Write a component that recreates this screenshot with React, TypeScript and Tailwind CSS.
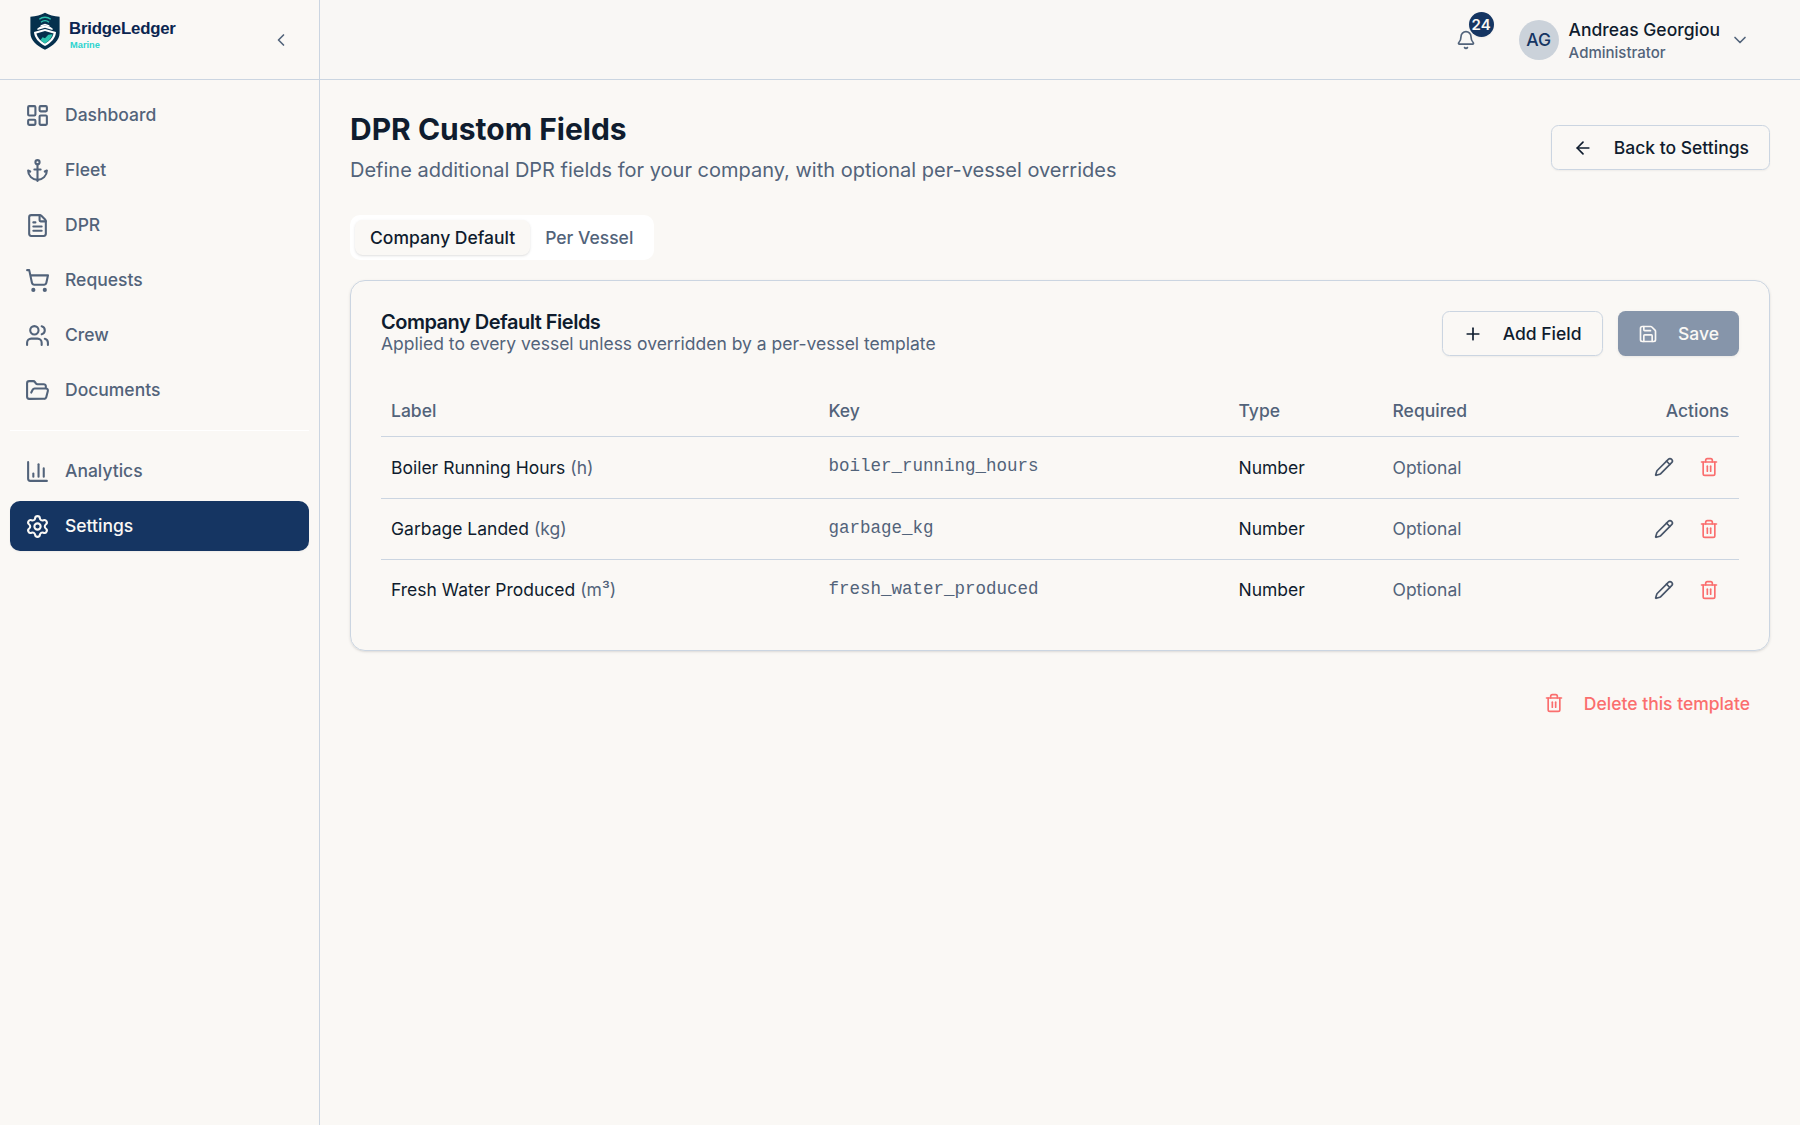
import {
  Anchor,
  ArrowLeft,
  Bell,
  ChartColumn,
  ChevronDown,
  ChevronLeft,
  FileText,
  FolderOpen,
  LayoutDashboard,
  Pencil,
  Plus,
  Save,
  Settings,
  ShoppingCart,
  Trash2,
  Users,
  type LucideIcon,
} from "lucide-react";

const mainNav = [
  { label: "Dashboard", icon: LayoutDashboard },
  { label: "Fleet", icon: Anchor },
  { label: "DPR", icon: FileText },
  { label: "Requests", icon: ShoppingCart },
  { label: "Crew", icon: Users },
  { label: "Documents", icon: FolderOpen },
];

const fields = [
  { label: "Boiler Running Hours", unit: "h", key: "boiler_running_hours" },
  { label: "Garbage Landed", unit: "kg", key: "garbage_kg" },
  { label: "Fresh Water Produced", unit: "m³", key: "fresh_water_produced" },
];

function Logo() {
  return (
    <div className="flex items-start">
      <svg width="30" height="38" viewBox="0 0 30 38" fill="none">
        <path d="M15 0.8 C19 3.2 24 4.2 29.6 4.7 V21 C29.6 28.5 23 33.8 15 37.8 C7 33.8 0.4 28.5 0.4 21 V4.7 C6 4.2 11 3.2 15 0.8Z" fill="#05304d" />
        {/* radar waves */}
        <path d="M9.3 7.2 C12.5 4.6 17.5 4.6 20.7 7.2" stroke="#2ec4b0" strokeWidth="1.4" />
        <path d="M11 10.2 C13.3 8.3 16.7 8.3 19 10.2" stroke="#2ec4b0" strokeWidth="1.4" />
        {/* bridge and deck */}
        <path d="M10.6 13.2 L15 11.8 L19.4 13.2 V14.4 L15 13.4 L10.6 14.4Z" fill="#fff" />
        <path d="M7.4 16.6 L10.4 14.4 L15 13.4 L19.6 14.4 L22.6 16.6 V18 L15 15.8 L7.4 18Z" fill="#fff" />
        {/* hull */}
        <path d="M4 20 L15 17 L26 20 C25.6 25.8 21.5 30.6 15 34 C8.5 30.6 4.4 25.8 4 20Z" fill="#fff" />
        <path d="M6.4 21.4 L15 19.1 L23.6 21.4 C22.6 25.4 19.5 29 15 31.6 C10.5 29 7.4 25.4 6.4 21.4Z" fill="#05304d" />
        <path d="M10.6 28 L12.6 25.2 L15 26.2 L18.3 22.8 L22.6 22.2 C21.4 26 19 29 15 31.6 C13.2 30.6 11.8 29.4 10.6 28Z" fill="#2ec4b0" />
      </svg>
      <div className="ml-[9px] pt-[7px] font-['Liberation_Sans',sans-serif] font-bold">
        <div className="text-[16.8px] leading-5 tracking-[-0.2px] text-[#0b2550]">BridgeLedger</div>
        <div className="ml-px text-[9.3px] leading-3 text-[#2dd4cf]">Marine</div>
      </div>
    </div>
  );
}

function NavItem({ label, icon: Icon, active = false }: { label: string; icon: LucideIcon; active?: boolean }) {
  return (
    <a
      className={
        active
          ? "flex h-[50px] items-center gap-[15px] rounded-[10px] bg-[#153562] px-[15px] font-medium text-[#faf8f5] shadow-xs"
          : "flex h-[50px] items-center gap-[15px] rounded-[10px] px-[15px] font-medium text-[#52637a]"
      }
    >
      <Icon size={25} />
      <span className="pb-px">{label}</span>
    </a>
  );
}

function Sidebar() {
  return (
    <aside className="flex w-80 shrink-0 flex-col border-r border-[#cbd5e1]">
      <div className="flex h-20 shrink-0 items-start justify-between border-b border-[#cbd5e1] pt-3 pr-7 pl-[30px]">
        <Logo />
        <button className="mt-[18px] text-[#52637a]">
          <ChevronLeft size={20} />
        </button>
      </div>
      <nav className="flex flex-col gap-[5px] p-2.5">
        {mainNav.map((item) => (
          <NavItem key={item.label} {...item} />
        ))}
        <div className="my-2.5 h-px bg-white" />
        <NavItem label="Analytics" icon={ChartColumn} />
        <NavItem label="Settings" icon={Settings} active />
      </nav>
    </aside>
  );
}

function Header() {
  return (
    <header className="flex h-20 shrink-0 items-center justify-end border-b border-[#cbd5e1] bg-[#f9f7f5] pr-[50px]">
      <button className="relative mr-[43px] text-[#52637a]">
        <Bell size={20} />
        <span className="absolute -top-[17.5px] left-[13px] flex size-[25px] items-center justify-center rounded-full bg-[#153562] text-[15px] font-semibold text-[#faf8f5] shadow-xs">
          24
        </span>
      </button>
      <div className="flex items-center gap-2.5">
        <div className="flex size-10 items-center justify-center rounded-full bg-[#cbd2da] font-medium text-[#153562]">
          AG
        </div>
        <div className="font-medium">
          <div className="leading-[25px]">Andreas Georgiou</div>
          <div className="pt-px text-[15px] leading-5 text-[#52637a]">Administrator</div>
        </div>
        <ChevronDown size={20} className="text-[#52637a]" />
      </div>
    </header>
  );
}

function FieldsTable() {
  return (
    <table className="mt-[30px] w-full table-fixed border-separate border-spacing-0 text-left">
      <colgroup>
        <col className="w-[437.5px]" />
        <col className="w-[410px]" />
        <col className="w-[154px]" />
        <col className="w-[170px]" />
        <col />
      </colgroup>
      <thead>
        <tr className="h-[51.25px] text-[#52637a] [&>th]:border-b [&>th]:border-[#cbd5e1] [&>th]:px-2.5 [&>th]:pb-0.5 [&>th]:font-medium">
          <th>Label</th>
          <th>Key</th>
          <th>Type</th>
          <th>Required</th>
          <th className="text-right">Actions</th>
        </tr>
      </thead>
      <tbody className="[&>tr:last-child]:h-[60px] [&>tr:last-child>td]:border-0">
        {fields.map((field) => (
          <tr key={field.key} className="h-[61.25px] [&>td]:border-b [&>td]:border-[#cbd5e1] [&>td]:px-2.5">
            <td>
              {field.label} <span className="text-[#52637a]">({field.unit})</span>
            </td>
            <td className="pb-px font-['Liberation_Mono',monospace] text-[#52637a]">{field.key}</td>
            <td>Number</td>
            <td className="text-[#52637a]">Optional</td>
            <td>
              <div className="flex justify-end gap-[5px]">
                <button className="flex size-10 items-center justify-center text-[#475569]">
                  <Pencil size={20} />
                </button>
                <button className="flex size-10 items-center justify-center text-[#fa6e6e]">
                  <Trash2 size={20} />
                </button>
              </div>
            </td>
          </tr>
        ))}
      </tbody>
    </table>
  );
}

export default function App() {
  return (
    <div className="flex h-screen bg-[#faf8f5] font-['Inter',sans-serif] text-[17.5px] leading-[25px] text-[#0f1c2e]">
      <Sidebar />
      <div className="flex min-w-0 flex-1 flex-col">
        <Header />
        <main className="flex-1 p-[30px]">
          <div className="flex items-center justify-between">
            <div>
              <h1 className="text-[30px] leading-[38px] font-bold">DPR Custom Fields</h1>
              <p className="mt-[7px] text-[20px] leading-[30px] text-[#52637a]">
                Define additional DPR fields for your company, with optional per-vessel overrides
              </p>
            </div>
            <button className="flex h-[45px] items-center gap-[21px] rounded-[7.5px] border border-[#cbd5e1] pr-5 pl-[21px] font-medium shadow-xs">
              <ArrowLeft size={20} />
              Back to Settings
            </button>
          </div>

          <div className="mt-[30px] inline-flex h-[45px] items-center rounded-[10px] bg-white py-[5px] pr-1.5 pl-[5px] align-top font-medium">
            <button className="h-[35px] rounded-[7.5px] bg-[#faf8f5] px-[15px] shadow-sm">Company Default</button>
            <button className="h-[35px] px-[15px] text-[#52637a]">Per Vessel</button>
          </div>

          <section className="mt-5 rounded-[15px] border border-[#cbd5e1] p-[30px] shadow-sm">
            <div className="flex items-center justify-between">
              <div>
                <h2 className="relative top-px text-[20px] leading-5 font-semibold tracking-tight">Company Default Fields</h2>
                <p className="text-[#52637a]">Applied to every vessel unless overridden by a per-vessel template</p>
              </div>
              <div className="flex gap-[15px]">
                <button className="flex h-[45px] items-center gap-5 rounded-[7.5px] border border-[#cbd5e1] px-5 font-medium shadow-xs">
                  <Plus size={20} />
                  Add Field
                </button>
                <button
                  className="flex h-[45px] items-center gap-5 rounded-[7.5px] bg-[#153562] pr-5 pl-[20.5px] font-medium text-[#faf8f5] opacity-50 shadow-sm"
                  disabled
                >
                  <Save size={20} />
                  Save
                </button>
              </div>
            </div>
            <FieldsTable />
          </section>

          <div className="mt-[30px] flex justify-end">
            <button className="flex h-[45px] items-center gap-5 px-5 font-medium text-[#fa6e6e]">
              <Trash2 size={20} />
              Delete this template
            </button>
          </div>
        </main>
      </div>
    </div>
  );
}
